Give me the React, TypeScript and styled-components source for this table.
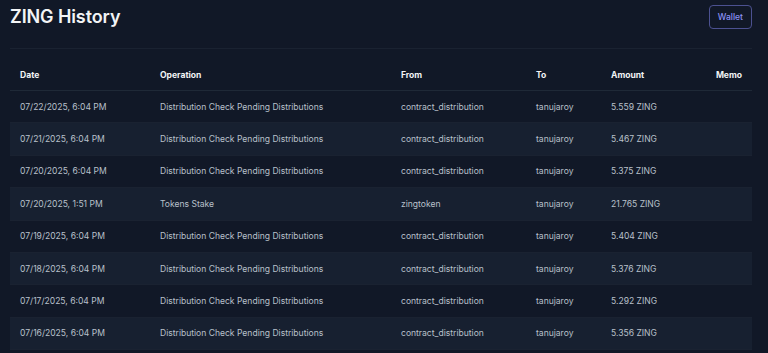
import { FC } from "react";
import styled, { createGlobalStyle } from "styled-components";

type Entry = {
  date: string;
  operation: string;
  from: string;
  to: string;
  amount: string;
  memo: string;
};

const HISTORY: Entry[] = [
  { date: "07/22/2025, 6:04 PM", operation: "Distribution Check Pending Distributions", from: "contract_distribution", to: "tanujaroy", amount: "5.559 ZING", memo: "" },
  { date: "07/21/2025, 6:04 PM", operation: "Distribution Check Pending Distributions", from: "contract_distribution", to: "tanujaroy", amount: "5.467 ZING", memo: "" },
  { date: "07/20/2025, 6:04 PM", operation: "Distribution Check Pending Distributions", from: "contract_distribution", to: "tanujaroy", amount: "5.375 ZING", memo: "" },
  { date: "07/20/2025, 1:51 PM", operation: "Tokens Stake", from: "zingtoken", to: "tanujaroy", amount: "21.765 ZING", memo: "" },
  { date: "07/19/2025, 6:04 PM", operation: "Distribution Check Pending Distributions", from: "contract_distribution", to: "tanujaroy", amount: "5.404 ZING", memo: "" },
  { date: "07/18/2025, 6:04 PM", operation: "Distribution Check Pending Distributions", from: "contract_distribution", to: "tanujaroy", amount: "5.376 ZING", memo: "" },
  { date: "07/17/2025, 6:04 PM", operation: "Distribution Check Pending Distributions", from: "contract_distribution", to: "tanujaroy", amount: "5.292 ZING", memo: "" },
  { date: "07/16/2025, 6:04 PM", operation: "Distribution Check Pending Distributions", from: "contract_distribution", to: "tanujaroy", amount: "5.356 ZING", memo: "" },
];

const GlobalStyle = createGlobalStyle`
  html, body {
    margin: 0;
    background: #111827;
    color: #d1d5db;
    font-family: Inter, "Noto Sans", sans-serif;
  }
`;

const App: FC = () => {
  return (
    <>
      <GlobalStyle />
      <SPage>
        <SHeader>
          <STitle>ZING History</STitle>
          <SWalletButton type="button">Wallet</SWalletButton>
        </SHeader>

        <STableWrap>
          <STable>
            <colgroup>
              <col style={{ width: 140 }} />
              <col style={{ width: 241 }} />
              <col style={{ width: 135 }} />
              <col style={{ width: 75 }} />
              <col style={{ width: 100 }} />
              <col />
            </colgroup>
            <thead>
              <tr>
                <SHeadCell>Date</SHeadCell>
                <SHeadCell>Operation</SHeadCell>
                <SHeadCell>From</SHeadCell>
                <SHeadCell>To</SHeadCell>
                <SHeadCell>Amount</SHeadCell>
                <SHeadCell $right>Memo</SHeadCell>
              </tr>
            </thead>
            <tbody>
              {HISTORY.map((item, i) => (
                <SRow key={i} $striped={i % 2 === 1}>
                  <SCell>{item.date}</SCell>
                  <SCell>{item.operation}</SCell>
                  <SCell>{item.from}</SCell>
                  <SCell>{item.to}</SCell>
                  <SCell>{item.amount}</SCell>
                  <SCell $right>{item.memo}</SCell>
                </SRow>
              ))}
            </tbody>
          </STable>
        </STableWrap>
      </SPage>
    </>
  );
};

const SPage = styled.div`
  padding: 5px 16px 0 10px;
`;

const SHeader = styled.header`
  display: flex;
  justify-content: space-between;
  align-items: flex-start;
  height: 43px;
`;

const STitle = styled.h1`
  margin: 0;
  font-size: 18px;
  font-weight: 600;
  line-height: 24px;
  color: #f3f4f6;
  letter-spacing: -0.1px;
`;

const SWalletButton = styled.button`
  height: 24px;
  padding: 0 8px;
  border: 1px solid #4c5190;
  border-radius: 4px;
  background: transparent;
  color: #8c92f5;
  font-family: Inter, sans-serif;
  font-size: 8.55px;
  font-weight: 500;
`;

const STableWrap = styled.div`
  border-top: 1px solid #1a2231;
  padding-top: 11px;
`;

const STable = styled.table`
  width: 100%;
  table-layout: fixed;
  border-collapse: collapse;
  font-size: 8.55px;
`;

const SHeadCell = styled.th<{ $right?: boolean }>`
  height: 30px;
  padding: 0 10px;
  text-align: ${(p) => (p.$right ? "right" : "left")};
  font-weight: 700;
  color: #f3f4f6;
  border-bottom: 1px solid #1f2937;
`;

const SRow = styled.tr<{ $striped: boolean }>`
  background: ${(p) => (p.$striped ? "#172030" : "transparent")};
  border-bottom: 1px solid #1a2231;
`;

const SCell = styled.td<{ $right?: boolean }>`
  height: 31.4px;
  padding: 0 10px;
  text-align: ${(p) => (p.$right ? "right" : "left")};
  color: #b9c0cb;
  white-space: nowrap;
`;

export default App;
